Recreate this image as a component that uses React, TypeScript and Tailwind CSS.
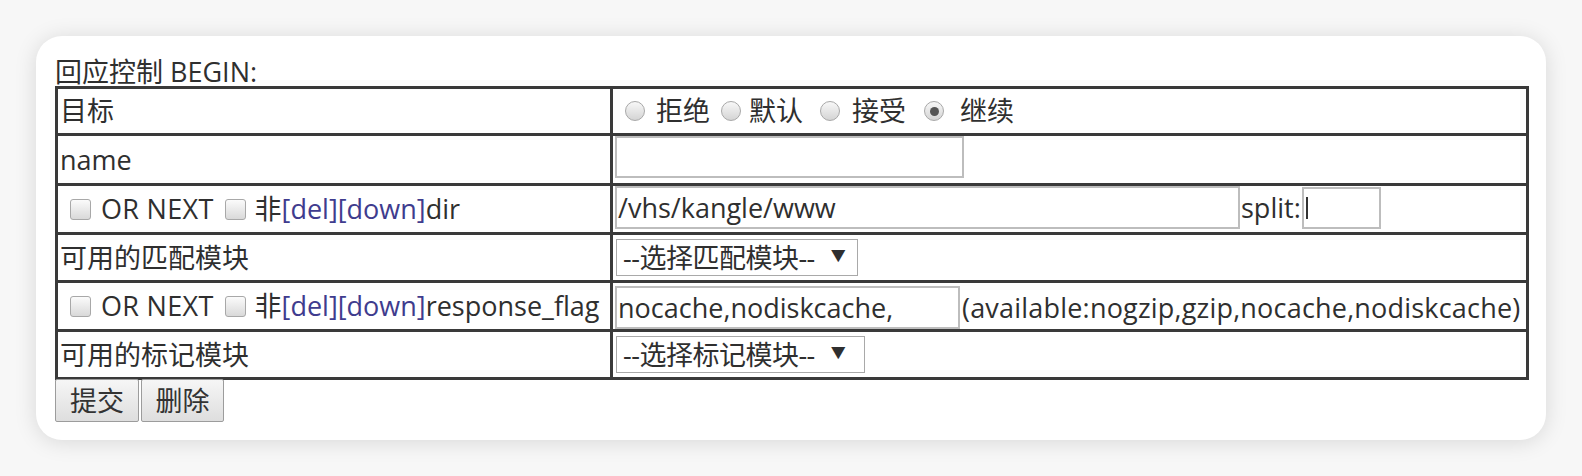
import React from "react";

function Checkbox() {
  return (
    <span className="inline-block w-[21px] h-[21px] shrink-0 rounded-[3px] border border-[#a8a8a8] bg-gradient-to-b from-[#fbfbfb] to-[#d9d9d9]" />
  );
}

function Radio({ checked = false }: { checked?: boolean }) {
  return (
    <span className="inline-flex items-center justify-center w-[20px] h-[20px] shrink-0 rounded-full border border-[#a8a8a8] bg-gradient-to-b from-[#f8f8f8] to-[#d4d4d4]">
      {checked && <span className="block w-[9px] h-[9px] rounded-full bg-[#555]" />}
    </span>
  );
}

function FlagLabel({ name }: { name: string }) {
  return (
    <div className="flex items-center pl-[12px]">
      <Checkbox />
      <span className="ml-[10px] tracking-[0.3px]">OR NEXT</span>
      <span className="ml-[11px] flex items-center"><Checkbox /></span>
      <span className="ml-[9px]">非</span>
      <span className="text-[#3f3c8e]">[del][down]</span>
      <span>{name}</span>
    </div>
  );
}

function SelectBox({ label, width }: { label: string; width: string }) {
  return (
    <div className={`flex items-center h-[37px] border border-[#a9a9a9] bg-white pl-[6px] ${width}`}>
      <span className="tracking-[-0.5px]">{label}</span>
      <span className="ml-[16px] text-[15px] -mt-[6px]">▼</span>
    </div>
  );
}

export default function App() {
  return (
    <div className="w-[1582px] h-[476px] bg-[#f7f7f7] pt-[36px] pl-[36px] font-['Open_Sans','Noto_Sans_CJK_SC',sans-serif] text-[#2f2f2f] text-[27px]">
      <div className="w-[1510px] h-[404px] bg-white rounded-[26px] shadow-[0_2px_22px_rgba(0,0,0,0.13)] pt-[22px] pl-[19px]">
        <div className="h-[28px] leading-[28px]">回应控制 BEGIN:</div>
        <div className="w-[1474px] border-[3px] border-[#3a3a3a] leading-[32px]">
          {/* row 1 */}
          <div className="flex h-[44px]">
            <div className="w-[555px] border-r-[3px] border-[#3a3a3a] pl-[2px] flex items-center">目标</div>
            <div className="flex-1 flex items-center pl-[12px]">
              <Radio />
              <span className="ml-[11px]">拒绝</span>
              <span className="ml-[11px] flex items-center"><Radio /></span>
              <span className="ml-[8px]">默认</span>
              <span className="ml-[17px] flex items-center"><Radio /></span>
              <span className="ml-[12px]">接受</span>
              <span className="ml-[18px] flex items-center"><Radio checked /></span>
              <span className="ml-[16px]">继续</span>
            </div>
          </div>
          {/* row 2 */}
          <div className="flex h-[50px] border-t-[3px] border-[#3a3a3a]">
            <div className="w-[555px] border-r-[3px] border-[#3a3a3a] pl-[2px] flex items-center">name</div>
            <div className="flex-1 pl-[2px]">
              <div className="w-[349px] h-[42px] border-2 border-[#bdbdbd]" />
            </div>
          </div>
          {/* row 3 */}
          <div className="flex h-[49px] border-t-[3px] border-[#3a3a3a]">
            <div className="w-[555px] border-r-[3px] border-[#3a3a3a] flex items-center">
              <FlagLabel name="dir" />
            </div>
            <div className="flex-1 pl-[2px] flex items-start">
              <div className="w-[625px] h-[43px] border-2 border-[#bdbdbd] pl-[1px] flex items-center">/vhs/kangle/www</div>
              <span className="ml-[1px] h-[43px] flex items-center">split:</span>
              <div className="ml-[1px] mt-[1px] w-[79px] h-[42px] border-2 border-[#bdbdbd] pl-[2px] flex items-center">
                <span className="block w-[2px] h-[22px] bg-[#333]" />
              </div>
            </div>
          </div>
          {/* row 4 */}
          <div className="flex h-[48px] border-t-[3px] border-[#3a3a3a]">
            <div className="w-[555px] border-r-[3px] border-[#3a3a3a] pl-[2px] flex items-center">可用的匹配模块</div>
            <div className="flex-1 pl-[3px] flex items-center">
              <SelectBox label="--选择匹配模块--" width="w-[242px]" />
            </div>
          </div>
          {/* row 5 */}
          <div className="flex h-[49px] border-t-[3px] border-[#3a3a3a]">
            <div className="w-[555px] border-r-[3px] border-[#3a3a3a] flex items-center">
              <FlagLabel name="response_flag" />
            </div>
            <div className="flex-1 pl-[2px] flex items-end">
              <div className="w-[345px] h-[43px] border-2 border-[#bdbdbd] pl-[1px] flex items-center">nocache,nodiskcache,</div>
              <span className="ml-[2px] h-[43px] flex items-center tracking-[0.2px]">(available:nogzip,gzip,nocache,nodiskcache)</span>
            </div>
          </div>
          {/* row 6 */}
          <div className="flex h-[48px] border-t-[3px] border-[#3a3a3a]">
            <div className="w-[555px] border-r-[3px] border-[#3a3a3a] pl-[2px] flex items-center">可用的标记模块</div>
            <div className="flex-1 pl-[3px] flex items-center">
              <SelectBox label="--选择标记模块--" width="w-[249px]" />
            </div>
          </div>
        </div>
        <div className="flex gap-[2px] -mt-[1px]">
          <button className="w-[84px] h-[43px] rounded-[2px] border border-[#9c9c9c] bg-gradient-to-b from-[#f6f6f6] to-[#dedede] text-[27px] leading-[32px] text-[#333]">提交</button>
          <button className="w-[83px] h-[43px] rounded-[2px] border border-[#9c9c9c] bg-gradient-to-b from-[#f6f6f6] to-[#dedede] text-[27px] leading-[32px] text-[#333]">删除</button>
        </div>
      </div>
    </div>
  );
}
